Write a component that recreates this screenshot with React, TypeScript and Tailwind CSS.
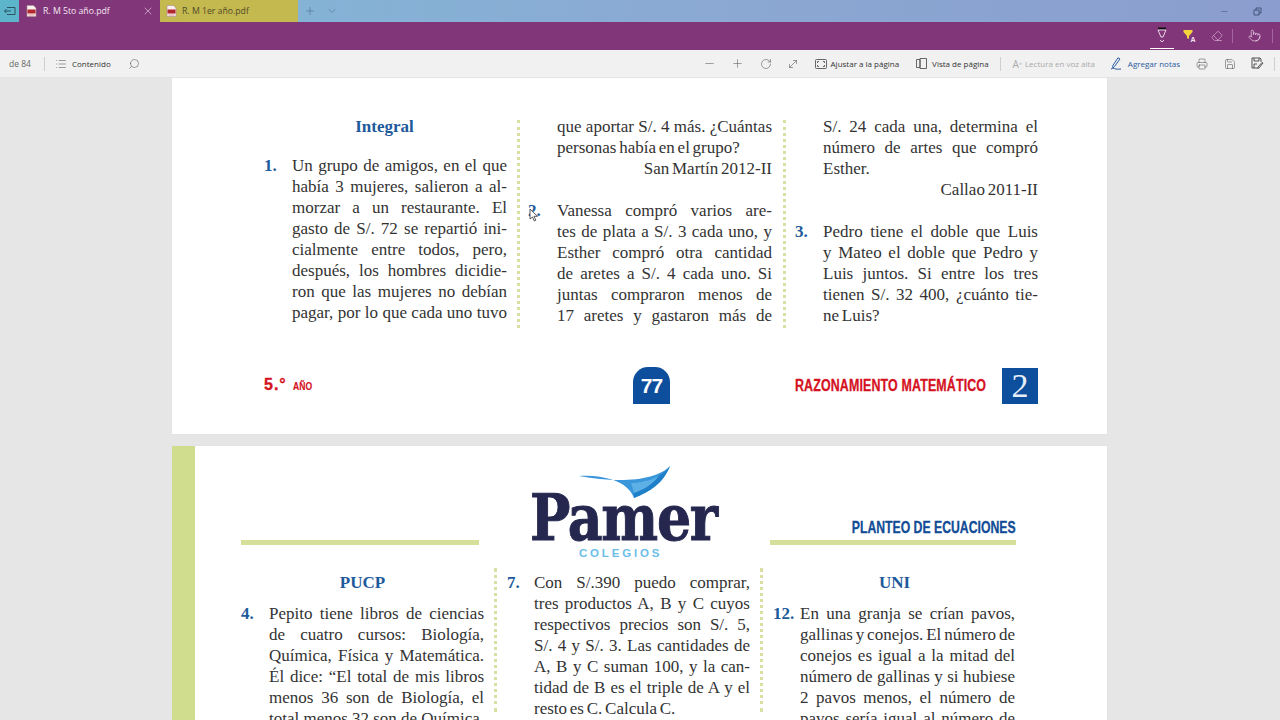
import React from "react";
import { List, Search, Minus, Plus, RotateCw, MoveDiagonal, Printer, Save, X, ChevronDown, Eraser, Pointer } from "lucide-react";

const J = ({ children }: { children: React.ReactNode }) => (
  <div className="h-[21px] text-justify [text-align-last:justify] whitespace-nowrap">{children}</div>
);
const L = ({ children }: { children: React.ReactNode }) => <div className="h-[21px] whitespace-nowrap">{children}</div>;
const R = ({ children }: { children: React.ReactNode }) => <div className="h-[21px] text-right whitespace-nowrap">{children}</div>;

const Lines = ({ lines, last }: { lines: string[]; last?: boolean }) => (
  <div>
    {lines.map((t, i) => (last && i === lines.length - 1 ? <L key={i}>{t}</L> : <J key={i}>{t}</J>))}
  </div>
);

const Item = ({ n, children, w }: { n: string; children: React.ReactNode; w: string }) => (
  <div className="flex">
    <div className={`${w} shrink-0 font-bold text-[#1d5a9c] text-[17px] leading-[21px]`}>{n}</div>
    <div className="flex-1 min-w-0">{children}</div>
  </div>
);

const Dots = ({ className }: { className: string }) => (
  <div className={`w-0 border-l-[3px] border-dotted border-[#d9e0a2] ${className}`} />
);

const Heading = ({ children }: { children: React.ReactNode }) => (
  <div className="h-[21px] text-center font-bold text-[#1d5a9c] text-[17px] leading-[21px]">{children}</div>
);

const PdfIcon = () => (
  <svg width="11" height="12" viewBox="0 0 11 12" className="shrink-0">
    <path d="M1 .5h6.5L10 3v8.500H1z" fill="#f7f0ee" stroke="#a88" strokeWidth=".6" />
    <rect x="1.500" y="4.500" width="8" height="4" fill="#b3262d" />
    <rect x="2.500" y="9.500" width="6" height="1" fill="#d99" />
  </svg>
);

function TopBar() {
  return (
    <div className="h-[22px] flex items-stretch bg-gradient-to-r from-[#7ebbd9] via-[#8aaad3] to-[#8b9dce] text-[8.700px] font-['Open_Sans',sans-serif] [word-spacing:0]">
      <div className="w-[19px] bg-[#5cb5ca] flex items-center justify-center text-[#234a55]">
        <svg width="12" height="10" viewBox="0 0 12 10" fill="none" stroke="currentColor" strokeWidth="0.9">
          <path d="M3 1.500h8v7H3M0.500 5H7M2.500 3 .5 5l2 2" />
        </svg>
      </div>
      <div className="w-[141px] bg-[#82367a] flex items-center pl-[7px] text-[#f3e7f1]">
        <PdfIcon />
        <span className="ml-[6px]">R. M 5to año.pdf</span>
        <X size={12} strokeWidth={1.2} className="ml-auto mr-[6px] text-[#f0dcec]" />
      </div>
      <div className="w-[138px] bg-[#c4b94f] flex items-center pl-[6px] text-[#4f4a28]">
        <PdfIcon />
        <span className="ml-[5px]">R. M 1er año.pdf</span>
      </div>
      <div className="flex items-center text-[#3d5f80]">
        <Plus size={12} strokeWidth={1} className="ml-[6px]" />
        <ChevronDown size={12} strokeWidth={1} className="ml-[10px]" />
      </div>
      <div className="ml-auto flex items-center text-[#33476b]">
        <Minus size={9} strokeWidth={1.2} className="mr-[24px]" />
        <svg width="9" height="9" viewBox="0 0 9 9" fill="none" stroke="currentColor" strokeWidth=".8" className="mr-[18px]">
          <path d="M1 3h5v5H1zM3 3V1h5v5H6" />
        </svg>
      </div>
    </div>
  );
}

function InkBar() {
  return (
    <div className="h-[28px] bg-[#82367a] flex items-start justify-end text-white">
      <div className="relative w-[24px] h-[27px] flex items-center justify-center border-b-[1.500px] border-white">
        <svg width="10" height="17" viewBox="0 0 10 17" fill="none" stroke="#fff" strokeWidth=".8">
          <path d="M1 1.500h8" stroke="#111" strokeWidth="2" />
          <path d="M1 3h8L6 10H4zM3 13l2 2 2-2" />
        </svg>
      </div>
      <svg width="13" height="13" viewBox="0 0 13 13" className="ml-[9px] mt-[7px]">
        <path d="M.5 1h9v2L6 7v3L4 9V7L.5 3z" fill="#f5d33d" />
        <text x="7.500" y="12.500" fontSize="7" fill="#f2e4ef" fontFamily="Liberation Sans" fontWeight="bold">A</text>
      </svg>
      <Eraser size={12} strokeWidth={1} className="ml-[15px] mt-[8px] text-[#f1d5ec]" />
      <div className="w-px h-[14px] bg-[#a565a0] ml-[9px] mt-[7px]" />
      <Pointer size={13} strokeWidth={1.1} className="ml-[15px] mt-[7px] text-[#f6e9f3]" />
      <div className="w-px h-[14px] bg-[#a565a0] ml-[11px] mr-[7px] mt-[7px]" />
    </div>
  );
}

function Tool() {
  const t = "text-[8px] text-[#333] whitespace-nowrap";
  return (
    <div className="h-[28px] bg-[#f1f1f1] flex items-center font-['Open_Sans',sans-serif] text-[#444] border-b border-[#e4e4e4] [word-spacing:0]">
      <span className="ml-[9px] text-[8.500px] text-[#666] w-[25px] whitespace-nowrap">de 84</span>
      <div className="w-px h-[14px] bg-[#cfcfcf] ml-[10px]" />
      <List size={12} strokeWidth={1} className="ml-[10px]" />
      <span className={`${t} ml-[5px]`}>Contenido</span>
      <Search size={12} strokeWidth={1} className="ml-[17px] -scale-x-100" />
      <div className="ml-auto flex items-center">
        <Minus size={13} strokeWidth={0.9} />
        <Plus size={13} strokeWidth={0.9} className="ml-[15px]" />
        <RotateCw size={12} strokeWidth={1} className="ml-[16px]" />
        <MoveDiagonal size={12} strokeWidth={1} className="ml-[15px]" />
        <svg width="12" height="10" viewBox="0 0 12 10" fill="none" stroke="currentColor" strokeWidth=".8" className="ml-[16px]">
          <rect x=".5" y=".5" width="11" height="9" rx="1" />
          <path d="M2.500 4V2.500H4M8 2.500h1.500V4M2.500 6v1.500H4M8 7.500h1.500V6" />
        </svg>
        <span className={`${t} ml-[4px]`}>Ajustar a la página</span>
        <svg width="11" height="11" viewBox="0 0 11 11" fill="none" stroke="currentColor" strokeWidth=".8" className="ml-[17px]">
          <path d="M.5 1.500h3.500v8H.5zM4 .5h6.500v10H4z" />
        </svg>
        <span className={`${t} ml-[5px]`}>Vista de página</span>
        <div className="w-px h-[14px] bg-[#cfcfcf] ml-[11px]" />
        <span className="ml-[12px] text-[10px] leading-[12px] text-[#aaa]">A<sup className="text-[6px]">»</sup></span>
        <span className="ml-[3px] text-[8px] text-[#aaa] whitespace-nowrap">Lectura en voz alta</span>
        <svg width="13" height="13" viewBox="0 0 13 13" fill="none" stroke="#2a5a9e" strokeWidth="1" className="ml-[15px]">
          <path d="M8 .8 10 2 4.500 9.500 3 11l-.3-2.200zM1 12c2-1 3-.5 4-.2s3 .6 6 .2" />
        </svg>
        <span className="ml-[5px] text-[8px] text-[#2a5a9e] whitespace-nowrap">Agregar notas</span>
        <Printer size={12} strokeWidth={1} className="ml-[16px]" />
        <Save size={12} strokeWidth={1} className="ml-[16px]" />
        <svg width="13" height="13" viewBox="0 0 13 13" fill="none" stroke="currentColor" strokeWidth=".9" className="ml-[15px]">
          <path d="M6 11H1V1h8l1 1v3M3 1v3h5V1M3 11V7h3" />
          <path d="M12 6 8 11l-1.500.5L7 10l4-4.500z" />
        </svg>
        <div className="w-px h-[14px] bg-[#cfcfcf] ml-[10px] mr-[5px]" />
      </div>
    </div>
  );
}

function PageOne() {
  return (
    <div className="relative w-[935px] h-[356px] ml-[172px] bg-white pl-[92px] pt-[38px] shadow-[0_0_1px_rgba(0,0,0,0.06)]">
      <div className="flex h-[212px]">
        <div className="w-[243px]">
          <div className="pr-[2px]"><Heading>Integral</Heading></div>
          <div className="mt-[18px]">
            <Item n="1." w="w-[28px]">
              <Lines lines={["Un grupo de amigos, en el que", "había 3 mujeres, salieron a al-", "morzar a un restaurante. El", "gasto de S/. 72 se repartió ini-", "cialmente entre todos, pero,", "después, los hombres dicidie-", "ron que las mujeres no debían", "pagar, por lo que cada uno tuvo"]} />
            </Item>
          </div>
        </div>
        <Dots className="ml-[10px] mr-[8px] h-[208px] mt-[4px]" />
        <div className="w-[244px] pl-[29px]">
          <J>que aportar S/. 4 más. ¿Cuántas</J>
          <L>personas había en el grupo?</L>
          <R>San Martín 2012-II</R>
          <div className="-ml-[29px] mt-[21px]">
            <Item n="2." w="w-[29px]">
              <Lines lines={["Vanessa compró varios are-", "tes de plata a S/. 3 cada uno, y", "Esther compró otra cantidad", "de aretes a S/. 4 cada uno. Si", "juntas compraron menos de", "17 aretes y gastaron más de"]} />
            </Item>
          </div>
        </div>
        <Dots className="ml-[11px] mr-[9px] h-[208px] mt-[4px]" />
        <div className="w-[243px] pl-[28px]">
          <J>S/. 24 cada una, determina el</J>
          <J>número de artes que compró</J>
          <L>Esther.</L>
          <R>Callao 2011-II</R>
          <div className="-ml-[28px] mt-[21px]">
            <Item n="3." w="w-[28px]">
              <Lines last lines={["Pedro tiene el doble que Luis", "y Mateo el doble que Pedro y", "Luis juntos. Si entre los tres", "tienen S/. 32 400, ¿cuánto tie-", "ne Luis?"]} />
            </Item>
          </div>
        </div>
      </div>
      <div className="flex items-center mt-[39px] h-[37px] font-['Liberation_Sans',sans-serif] [word-spacing:0]">
        <div className="w-[369px] flex items-baseline text-[#d5121f] font-bold">
          <span className="text-[16px] tracking-[1px] [-webkit-text-stroke:0.3px_#d5121f]">5.°</span>
          <span className="text-[11px] ml-[6px] w-[19px] origin-left scale-x-[.78] [-webkit-text-stroke:0.2px_#d5121f]">AÑO</span>
        </div>
        <div className="w-[37px] h-[37px] bg-[#0d4f9c] rounded-t-[15px] flex items-center justify-center text-white text-[21px] font-bold tracking-[-1px]">77</div>
        <div className="w-[125px]" />
        <div className="w-[207px] overflow-visible">
          <div className="origin-left scale-x-[.775] text-[#d5121f] font-bold text-[16px] whitespace-nowrap tracking-[.2px] [-webkit-text-stroke:0.3px_#d5121f]">RAZONAMIENTO  MATEMÁTICO</div>
        </div>
        <div className="w-[36px] h-[36px] bg-[#0d4f9c] flex items-center justify-center text-[#e6eef8] text-[34px] font-['Liberation_Serif',serif]">2</div>
      </div>
      <svg width="10" height="15" viewBox="0 0 10 15" className="absolute left-[357px] top-[130px]">
        <path d="M1 1v10l2.500-2 1.800 4 1.500-.7L5 8.300h3.500z" fill="#fff" stroke="#333" strokeWidth=".8" />
      </svg>
    </div>
  );
}

function Logo() {
  return (
    <div className="relative w-[210px] h-[118px]">
      <svg width="92" height="33" viewBox="0 0 92 33" className="absolute left-[57px] top-[20px]">
        <path d="M0 10C20 9 48 13 55 32 70 26 84 18 91 0 78 14 42 18 0 10Z" fill="#3a97dc" />
        <path d="M55 32C70 26 84 18 91 0 82 12 68 16 52 17 54 22 55 27 55 32Z" fill="#1f7fc8" />
        <path d="M52 17C68 16 76 12 80 10 70 22 62 24 55 27Z" fill="#5cb0e6" />
      </svg>
      <div className="absolute left-[8px] top-[45px] origin-left scale-x-[.84] font-['DejaVu_Serif',serif] font-bold text-[#25274f] text-[64px] leading-[54px] tracking-[-1.500px] [-webkit-text-stroke:1px_#25274f]">Pamer</div>
      <div className="absolute left-[57px] top-[101px] font-['Liberation_Sans',sans-serif] font-bold text-[#6cbde8] text-[11.500px] tracking-[2.800px] leading-[12px]">COLEGIOS</div>
    </div>
  );
}

function PageTwo() {
  return (
    <div className="flex w-[935px] h-[300px] ml-[172px] bg-white mt-[12px] shadow-[0_0_1px_rgba(0,0,0,0.06)]">
      <div className="w-[23px] bg-[#d0dc8e]" />
      <div className="pl-[46px] flex-1">
        <div className="flex items-end h-[99px] [word-spacing:0]">
          <div className="w-[238px] h-[5px] bg-[#d5df99]" />
          <div className="w-[291px] relative self-stretch">
            <div className="absolute left-[43px] top-[0px]"><Logo /></div>
          </div>
          <div className="w-[246px] relative">
            <div className="absolute right-0 bottom-[7px] font-['Liberation_Sans',sans-serif] font-bold text-[#124c96] text-[17px] whitespace-nowrap origin-right scale-x-[.72] [-webkit-text-stroke:0.3px_#124c96]">PLANTEO DE ECUACIONES</div>
            <div className="h-[5px] bg-[#d5df99]" />
          </div>
        </div>
        <div className="flex mt-[27px]">
          <div className="w-[243px]">
            <div className="w-[243px]"><Heading>PUCP</Heading></div>
            <div className="mt-[10px]">
              <Item n="4." w="w-[28px]">
                <Lines lines={["Pepito tiene libros de ciencias", "de cuatro cursos: Biología,", "Química, Física y Matemática.", "Él dice: “El total de mis libros", "menos 36 son de Biología, el", "total menos 32 son de Química,"]} />
              </Item>
            </div>
          </div>
          <Dots className="ml-[10px] mr-[10px] h-[144px] mt-[-4px]" />
          <div className="w-[243px]">
            <Item n="7." w="w-[27px]">
              <Lines last lines={["Con S/.390 puedo comprar,", "tres productos A, B y C cuyos", "respectivos precios son S/. 5,", "S/. 4 y S/. 3. Las cantidades de", "A, B y C suman 100, y la can-", "tidad de B es el triple de A y el", "resto es C. Calcula C."]} />
            </Item>
          </div>
          <Dots className="ml-[10px] mr-[10px] h-[144px] mt-[-4px]" />
          <div className="w-[242px]">
            <div className="pl-[1px]"><Heading>UNI</Heading></div>
            <div className="mt-[10px]">
              <Item n="12." w="w-[27px]">
                <Lines lines={["En una granja se crían pavos,", "gallinas y conejos. El número de", "conejos es igual a la mitad del", "número de gallinas y si hubiese", "2 pavos menos, el número de", "pavos sería igual al número de"]} />
              </Item>
            </div>
          </div>
        </div>
      </div>
    </div>
  );
}

export default function App() {
  return (
    <div className="w-[1280px] h-[720px] overflow-hidden bg-[#e6e6e6] font-['Liberation_Serif',serif] text-[17px] leading-[21px] text-[#333] [word-spacing:-1.500px]">
      <TopBar />
      <InkBar />
      <Tool />
      <div className="overflow-hidden h-[642px]">
        <PageOne />
        <PageTwo />
      </div>
    </div>
  );
}
